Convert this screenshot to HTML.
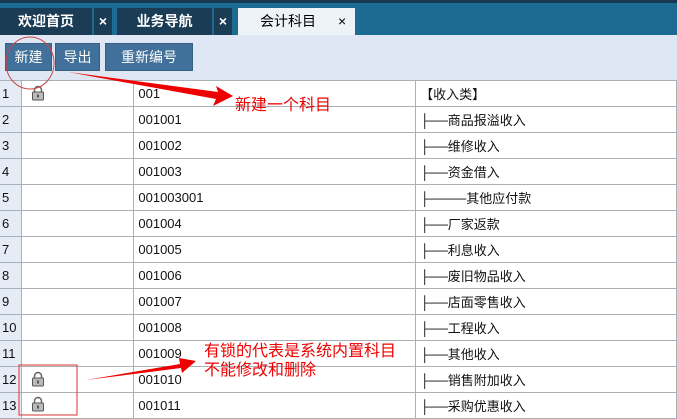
<!DOCTYPE html><html><head><meta charset="utf-8"><style>
*{margin:0;padding:0;box-sizing:border-box}
body{width:677px;height:419px;overflow:hidden;background:#fff;font-family:"Liberation Sans","Noto Sans CJK SC",sans-serif;position:relative}
.top{position:absolute;left:0;top:0;width:677px;height:35px;background:#1d6a93;border-top:3px solid #173a52}
.tab{position:absolute;top:8px;height:27px;background:#1b3c55;color:#fff;font-weight:bold;font-size:14px;line-height:27px;text-align:center}
.act{background:#eef3fa;color:#000}
.tb{position:absolute;left:0;top:35px;width:677px;height:45px;background:#dfe7f5}
.btn{position:absolute;top:43px;height:28px;background:#41709a;border:1px solid #35607f;color:#fff;font-size:14px;line-height:26px;text-align:center}
table{position:absolute;left:0;top:80px;border-collapse:collapse;font-size:13px}
td{height:26px;border:1px solid #a9b1b8;padding-left:4px;color:#111}
td.i{background:#e6ecf5;width:22px;padding-left:2px;border-left:none}
.red{position:absolute;color:#e00;font-size:16px}
</style></head><body>
<div class="top"></div>
<div class="tab" style="left:0;width:92px">欢迎首页</div><div class="tab" style="left:94px;width:18px">×</div>
<div class="tab" style="left:117px;width:95px">业务导航</div><div class="tab" style="left:214px;width:18px">×</div>
<div class="tab act" style="left:238px;width:117px;font-weight:normal"><span style="position:absolute;left:22px">会计科目</span><span style="position:absolute;left:100px">×</span></div>
<div class="tb"></div>
<div class="btn" style="left:5px;width:47px">新建</div>
<div class="btn" style="left:55px;width:45px">导出</div>
<div class="btn" style="left:105px;width:88px">重新编号</div>
<table>
<tr><td class="i">1</td><td style="width:112px"></td><td style="width:282px">001</td><td style="width:261px">【收入类】</td></tr>
<tr><td class="i">2</td><td></td><td>001001</td><td>├──商品报溢收入</td></tr>
<tr><td class="i">3</td><td></td><td>001002</td><td>├──维修收入</td></tr>
<tr><td class="i">4</td><td></td><td>001003</td><td>├──资金借入</td></tr>
<tr><td class="i">5</td><td></td><td>001003001</td><td>├────其他应付款</td></tr>
<tr><td class="i">6</td><td></td><td>001004</td><td>├──厂家返款</td></tr>
<tr><td class="i">7</td><td></td><td>001005</td><td>├──利息收入</td></tr>
<tr><td class="i">8</td><td></td><td>001006</td><td>├──废旧物品收入</td></tr>
<tr><td class="i">9</td><td></td><td>001007</td><td>├──店面零售收入</td></tr>
<tr><td class="i">10</td><td></td><td>001008</td><td>├──工程收入</td></tr>
<tr><td class="i">11</td><td></td><td>001009</td><td>├──其他收入</td></tr>
<tr><td class="i">12</td><td></td><td>001010</td><td>├──销售附加收入</td></tr>
<tr><td class="i">13</td><td></td><td>001011</td><td>├──采购优惠收入</td></tr>
</table>
<svg style="position:absolute;left:0;top:0" width="677" height="419">
<defs><g id="lock"><path d="M2.5 6V4a3.5 3.5 0 0 1 7 0v2" fill="none" stroke="#666" stroke-width="1.5"/><rect x="0.5" y="6" width="11" height="8" rx="1" fill="#bbb" stroke="#555"/><rect x="5" y="8.5" width="2" height="3" fill="#555"/></g></defs>
<use href="#lock" x="32" y="86"/>
<use href="#lock" x="32" y="372"/>
<use href="#lock" x="32" y="397"/>
<ellipse cx="30" cy="63" rx="24" ry="26" fill="none" stroke="#c44" stroke-width="1"/>
<rect x="19" y="365" width="58" height="50" fill="none" stroke="#d33" stroke-width="1"/>
<polygon points="68,72 218,92 216,86 233,96 213,106 216,99" fill="#e00"/>
<polygon points="86,380 180,364 179,358 196,361 182,373 181,368" fill="#e00"/>
</svg>
<div class="red" style="left:235px;top:91px">新建一个科目</div>
<div class="red" style="left:204px;top:342px;line-height:19px">有锁的代表是系统内置科目<br>不能修改和删除</div>
</body></html>
